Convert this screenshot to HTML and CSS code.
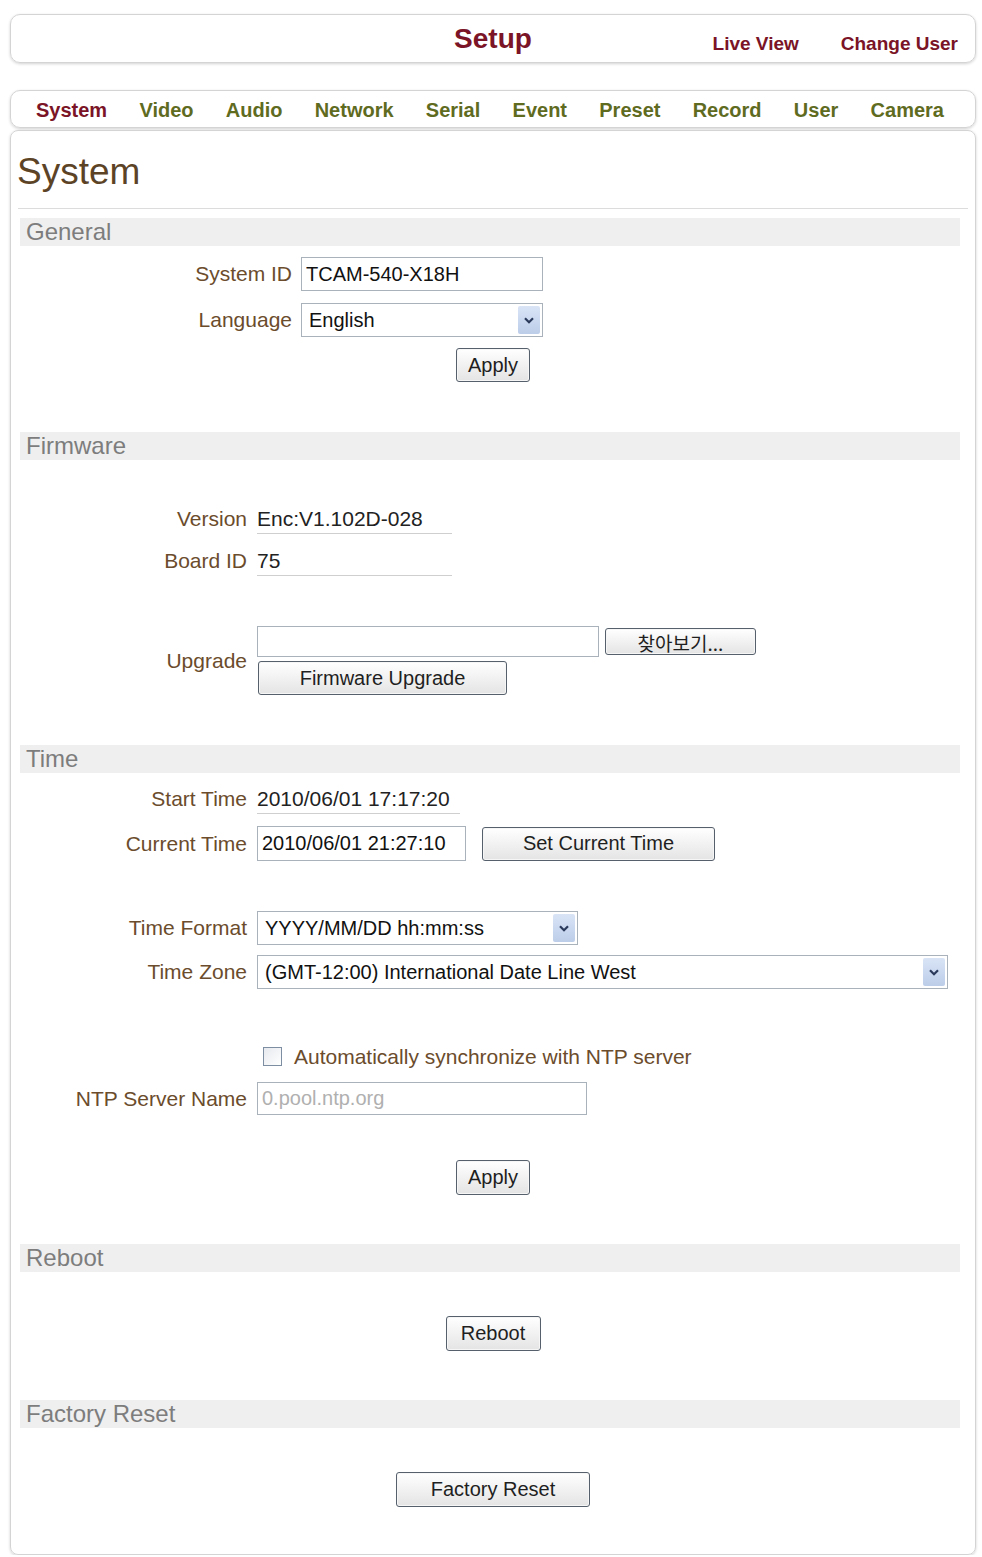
FILE: index.html
```html
<!DOCTYPE html>
<html lang="en">

<head>
  <meta charset="UTF-8">
  <title>Setup - System</title>
  <link rel="stylesheet" href="styles.css">
</head>

<body>
  <div class="page">

    <!-- Top bar -->
    <header class="topbar">
      <div></div>
      <h1 class="title">Setup</h1>
      <nav class="toplinks">
        <a href="#">Live View</a>
        <a href="#">Change User</a>
      </nav>
    </header>

    <!-- Setup menu -->
    <nav class="tabs">
      <a href="#" class="active">System</a>
      <a href="#">Video</a>
      <a href="#">Audio</a>
      <a href="#">Network</a>
      <a href="#">Serial</a>
      <a href="#">Event</a>
      <a href="#">Preset</a>
      <a href="#">Record</a>
      <a href="#">User</a>
      <a href="#">Camera</a>
    </nav>

    <main class="panel">
      <h2 class="page-title">System</h2>
      <div class="rule"></div>

      <!-- General -->
      <section class="group first">
        <h3 class="band">General</h3>
        <div class="row wide r-general1">
          <label class="lbl">System ID</label>
          <input type="text" class="field w-id" value="TCAM-540-X18H">
        </div>
        <div class="row wide r-gap12">
          <label class="lbl">Language</label>
          <div class="select w-id">
            <span class="select-text">English</span>
            <span class="select-arrow"><svg width="10" height="7" viewBox="0 0 10 7"><path d="M1 1.2 L5 5.2 L9 1.2" fill="none" stroke="#2b3a5c" stroke-width="2.2"/></svg></span>
          </div>
        </div>
        <div class="actions r-apply1">
          <button class="btn btn-apply">Apply</button>
        </div>
      </section>

      <!-- Firmware -->
      <section class="group">
        <h3 class="band">Firmware</h3>
        <div class="row r-version">
          <label class="lbl">Version</label>
          <span class="value w-version">Enc:V1.102D-028</span>
        </div>
        <div class="row r-gap12">
          <label class="lbl">Board ID</label>
          <span class="value w-version">75</span>
        </div>
        <div class="row r-upgrade">
          <label class="lbl">Upgrade</label>
          <div class="upgrade">
            <div class="file-line">
              <input type="text" class="field w-file">
              <button class="btn btn-browse">찾아보기...</button>
            </div>
            <button class="btn btn-firmware">Firmware Upgrade</button>
          </div>
        </div>
      </section>

      <!-- Time -->
      <section class="group">
        <h3 class="band">Time</h3>
        <div class="row r-start">
          <label class="lbl">Start Time</label>
          <span class="value w-start">2010/06/01 17:17:20</span>
        </div>
        <div class="row r-gap12">
          <label class="lbl">Current Time</label>
          <div class="inline">
            <input type="text" class="field w-current" value="2010/06/01 21:27:10">
            <button class="btn btn-settime">Set Current Time</button>
          </div>
        </div>
        <div class="row r-format">
          <label class="lbl">Time Format</label>
          <div class="select w-format">
            <span class="select-text">YYYY/MM/DD hh:mm:ss</span>
            <span class="select-arrow"><svg width="10" height="7" viewBox="0 0 10 7"><path d="M1 1.2 L5 5.2 L9 1.2" fill="none" stroke="#2b3a5c" stroke-width="2.2"/></svg></span>
          </div>
        </div>
        <div class="row r-gap10">
          <label class="lbl">Time Zone</label>
          <div class="select w-zone">
            <span class="select-text">(GMT-12:00) International Date Line West</span>
            <span class="select-arrow"><svg width="10" height="7" viewBox="0 0 10 7"><path d="M1 1.2 L5 5.2 L9 1.2" fill="none" stroke="#2b3a5c" stroke-width="2.2"/></svg></span>
          </div>
        </div>
        <div class="row r-ntpcheck">
          <span></span>
          <label class="check">
            <input type="checkbox" class="box">
            <span>Automatically synchronize with NTP server</span>
          </label>
        </div>
        <div class="row r-ntp">
          <label class="lbl">NTP Server Name</label>
          <input type="text" class="field w-ntp" placeholder="0.pool.ntp.org" disabled>
        </div>
        <div class="actions r-apply2">
          <button class="btn btn-apply">Apply</button>
        </div>
      </section>

      <!-- Reboot -->
      <section class="group tight">
        <h3 class="band">Reboot</h3>
        <div class="actions r-single">
          <button class="btn btn-reboot">Reboot</button>
        </div>
      </section>

      <!-- Factory Reset -->
      <section class="group tight">
        <h3 class="band">Factory Reset</h3>
        <div class="actions r-single">
          <button class="btn btn-factory">Factory Reset</button>
        </div>
      </section>
    </main>

  </div>
</body>

</html>
```

FILE: styles.css
```css
body {
  margin: 0;
  padding: 0;
  background: #ffffff;
  font-family: 'Liberation Sans', Arial, 'Noto Sans CJK KR', sans-serif;
  color: #222;
}

.page {
  width: 966px;
  margin-left: 10px;
  padding-top: 14px;
}

/* Top bar */
.topbar {
  display: grid;
  grid-template-columns: 1fr auto 1fr;
  align-items: baseline;
  height: 47px;
  border: 1px solid #d4d4d4;
  border-radius: 10px;
  box-shadow: 0 1px 3px rgba(0, 0, 0, 0.18);
}

.title {
  margin: 0;
  font-size: 28px;
  line-height: 47px;
  font-weight: bold;
  color: #7a1426;
}

.toplinks {
  justify-self: end;
  display: flex;
  gap: 42px;
  padding-right: 17px;
}

.toplinks a {
  font-size: 19px;
  font-weight: bold;
  color: #7a1426;
  text-decoration: none;
  position: relative;
  top: 2px;
}

/* Menu tabs */
.tabs {
  display: flex;
  justify-content: space-between;
  align-items: center;
  height: 36px;
  margin-top: 27px;
  padding: 0 31px 0 25px;
  border: 1px solid #d4d4d4;
  border-radius: 10px;
  box-shadow: 0 1px 3px rgba(0, 0, 0, 0.18);
}

.tabs a {
  font-size: 20px;
  font-weight: bold;
  color: #5f6b1f;
  text-decoration: none;
  padding-top: 2px;
}

.tabs a.active {
  color: #7a1426;
}

/* Main panel */
.panel {
  margin-top: 2px;
  height: 1425px;
  padding: 21px 0 0 0;
  box-sizing: border-box;
  border: 1px solid #d4d4d4;
  border-radius: 8px;
  box-shadow: 0 1px 3px rgba(0, 0, 0, 0.18);
}

.page-title {
  margin: 0 0 0 6px;
  font-size: 37px;
  line-height: 40px;
  font-weight: normal;
  color: #5c4326;
}

.rule {
  height: 1px;
  margin: 16px 7px 0 7px;
  background: #dcdcdc;
}

.group {
  margin-top: 50px;
}

.group.first {
  margin-top: 9px;
}

.group.tight {
  margin-top: 49px;
}

.band {
  margin: 0 15px 0 9px;
  height: 28px;
  padding-left: 6px;
  background: #efefef;
  font-size: 24px;
  line-height: 28px;
  font-weight: normal;
  color: #7d7d7d;
}

/* Form rows */
.row {
  display: grid;
  grid-template-columns: 236px auto;
  column-gap: 10px;
  justify-content: start;
  align-items: center;
}

.row.wide {
  grid-template-columns: 281px auto;
  column-gap: 9px;
}

.lbl {
  text-align: right;
  font-size: 21px;
  color: #6b4c2c;
  white-space: nowrap;
}

.value {
  display: block;
  height: 29px;
  line-height: 29px;
  font-size: 21px;
  color: #222;
  white-space: nowrap;
  border-bottom: 1px solid #cfcfcf;
}

.field {
  height: 34px;
  box-sizing: border-box;
  padding: 0 4px;
  border: 1px solid #a9b1bb;
  background: #fff;
  font-family: inherit;
  font-size: 20px;
  color: #111;
}

.field::placeholder {
  color: #b0b0b0;
}

.field:disabled {
  background: #fff;
}

.select {
  display: flex;
  align-items: center;
  height: 34px;
  box-sizing: border-box;
  padding: 2px;
  border: 1px solid #a9b1bb;
  background: #fff;
}

.select-text {
  flex: 1;
  padding-left: 5px;
  font-size: 20px;
  color: #111;
  white-space: nowrap;
}

.select-arrow {
  display: flex;
  align-items: center;
  justify-content: center;
  width: 22px;
  height: 100%;
  background: linear-gradient(#d9e4f6, #bccde9);
  border-radius: 2px;
}

.btn {
  box-sizing: border-box;
  border: 1px solid #56606c;
  border-radius: 3px;
  background: linear-gradient(#ffffff, #e4e4e4);
  box-shadow: inset 0 0 0 1px #f6f6f6;
  font-family: inherit;
  font-size: 20px;
  color: #1f1f1f;
  padding: 0;
}

.actions {
  display: flex;
  justify-content: center;
}

/* widths */
.w-id { width: 242px; }
.w-version { width: 195px; }
.w-start { width: 203px; }
.w-file { width: 342px; height: 31px; }
.w-current { width: 209px; height: 35px; }
.w-format { width: 321px; }
.w-zone { width: 691px; }
.w-ntp { width: 330px; height: 33px; }

.btn-apply { width: 74px; height: 34px; }
.btn-browse { width: 151px; height: 27px; margin-left: 6px; font-family: 'Noto Sans CJK KR', sans-serif; font-size: 19px; }
.btn-firmware { width: 249px; height: 34px; margin-top: 4px; margin-left: 1px; }
.btn-settime { width: 233px; height: 34px; margin-left: 16px; }
.btn-reboot { width: 95px; height: 35px; }
.btn-factory { width: 194px; height: 35px; }

.upgrade {
  display: flex;
  flex-direction: column;
  align-items: flex-start;
}

.file-line,
.inline {
  display: flex;
  align-items: center;
}

.check {
  display: flex;
  align-items: center;
  gap: 12px;
  margin-left: 6px;
  font-size: 21px;
  color: #6b4c2c;
  white-space: nowrap;
}

.box {
  appearance: none;
  width: 19px;
  height: 19px;
  margin: 0;
  border: 1px solid #7d8ea3;
  background: linear-gradient(135deg, #e6e9ee, #ffffff);
}

/* vertical spacing */
.r-general1 { margin-top: 11px; }
.r-gap12 { margin-top: 12px; }
.r-gap10 { margin-top: 10px; }
.r-apply1 { margin-top: 11px; }
.r-version { margin-top: 44px; }
.r-upgrade { margin-top: 50px; }
.r-start { margin-top: 11px; }
.r-format { margin-top: 50px; }
.r-ntpcheck { margin-top: 55px; height: 25px; }
.r-ntp { margin-top: 13px; }
.r-apply2 { margin-top: 45px; }
.r-apply2 .btn-apply { height: 35px; }
.r-single { margin-top: 44px; }
```
